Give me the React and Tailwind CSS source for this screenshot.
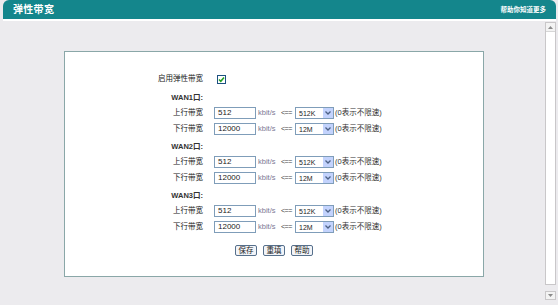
import React from "react";

const font = { fontFamily: '"Liberation Sans", "Noto Sans CJK SC", sans-serif' };

const Select = ({ value }) => (
  <div className="flex h-[12px] w-[39px] items-center border border-[#7f9db9] bg-white">
    <span className="flex-1 pl-[3px] text-[7px] leading-none text-[#222]">{value}</span>
    <span className="flex h-full w-[10px] items-center justify-center bg-[#c3d3fd]">
      <svg width="6" height="4" viewBox="0 0 6 4">
        <path d="M0.5 0.5 L3 3 L5.5 0.5" fill="none" stroke="#4d6185" strokeWidth="1.3" />
      </svg>
    </span>
  </div>
);

const BwRow = ({ label, value, sel }) => (
  <div className="grid h-[16px] grid-cols-[138px_1fr] items-center gap-x-[11px]">
    <span className="text-right text-[7.5px] text-[#222]">{label}</span>
    <div className="flex items-center">
      <div className="flex h-[12px] w-[42px] items-center border border-[#7f9db9] bg-white pl-[3px] text-[8px] text-[#222]">
        {value}
      </div>
      <span className="w-[25px] pl-[2px] text-[7.5px] text-[#7c7894]">kbit/s</span>
      <span className="w-[14px] text-[7px] tracking-[-0.5px] text-[#444]">{"<=="}</span>
      <Select value={sel} />
      <span className="pl-[1px] text-[7.5px] text-[#333]">(0表示不限速)</span>
    </div>
  </div>
);

const Wan = ({ name, first }) => (
  <div className={first ? "mt-[4px]" : "mt-[3px]"}>
    <div className="grid h-[14px] grid-cols-[138px_1fr] items-center gap-x-[11px]">
      <span className="text-right text-[7.5px] font-bold text-[#333]">{name}</span>
      <span />
    </div>
    <BwRow label="上行带宽" value="512" sel="512K" />
    <BwRow label="下行带宽" value="12000" sel="12M" />
  </div>
);

const Btn = ({ children }) => (
  <button className="flex h-[11px] w-[22px] items-center justify-center rounded-[2px] border-[1.5px] border-[#56708c] bg-[#f2f4f8] text-[7.5px] leading-none text-[#222]">
    {children}
  </button>
);

export default function App() {
  return (
    <div className="flex h-[305px] w-[558px] flex-col overflow-hidden bg-[#ecebee]" style={font}>
      {/* header */}
      <div className="ml-[3px] mr-[2px] flex h-[21px] items-center justify-between rounded-t-[6px] border-b-2 border-white bg-[#14868c] pl-[10px] pr-[10px]">
        <span className="text-[10px] font-bold tracking-[0.3px] text-white">弹性带宽</span>
        <span className="text-[6.5px] font-bold text-white">帮助你知道更多</span>
      </div>

      <div className="flex flex-1">
        {/* content */}
        <div className="flex-1 pt-[30px]">
          <div className="ml-[64px] flex h-[226px] w-[420px] flex-col border border-[#8aa7a8] bg-white pt-[19px]">
            <div className="grid h-[16px] grid-cols-[138px_1fr] items-center gap-x-[11px]">
              <span className="text-right text-[7.5px] text-[#222]">启用弹性带宽</span>
              <div className="pl-[3px]">
                <div className="flex h-[9px] w-[9px] items-center justify-center border border-[#1c5180] bg-white">
                  <svg width="7" height="7" viewBox="0 0 7 7">
                    <path d="M1 3.5 L2.8 5.3 L6 1.5" fill="none" stroke="#21a121" strokeWidth="1.6" />
                  </svg>
                </div>
              </div>
            </div>
            <Wan name="WAN1口:" first />
            <Wan name="WAN2口:" />
            <Wan name="WAN3口:" />
            <div className="mt-[10px] flex gap-[6px] pl-[170px]">
              <Btn>保存</Btn>
              <Btn>重填</Btn>
              <Btn>帮助</Btn>
            </div>
          </div>
        </div>

        {/* scrollbar */}
        <div className="mr-[2px] flex w-[11px] flex-col pt-[1px]">
          <div className="flex h-[263px] flex-col border border-[#c9c7c9] bg-white">
            <div className="flex h-[9px] items-center justify-center border-b border-[#d6d6d6] bg-[#f3f3f3]">
              <svg width="5" height="3" viewBox="0 0 5 3">
                <path d="M0 3 L2.5 0 L5 3 Z" fill="#8a8a8a" />
              </svg>
            </div>
          </div>
          <div className="mt-[6px] flex h-[9px] items-center justify-center border border-[#c9c7c9] bg-[#f3f3f3]">
            <svg width="5" height="3" viewBox="0 0 5 3">
              <path d="M0 0 L2.5 3 L5 0 Z" fill="#8a8a8a" />
            </svg>
          </div>
        </div>
      </div>
    </div>
  );
}
